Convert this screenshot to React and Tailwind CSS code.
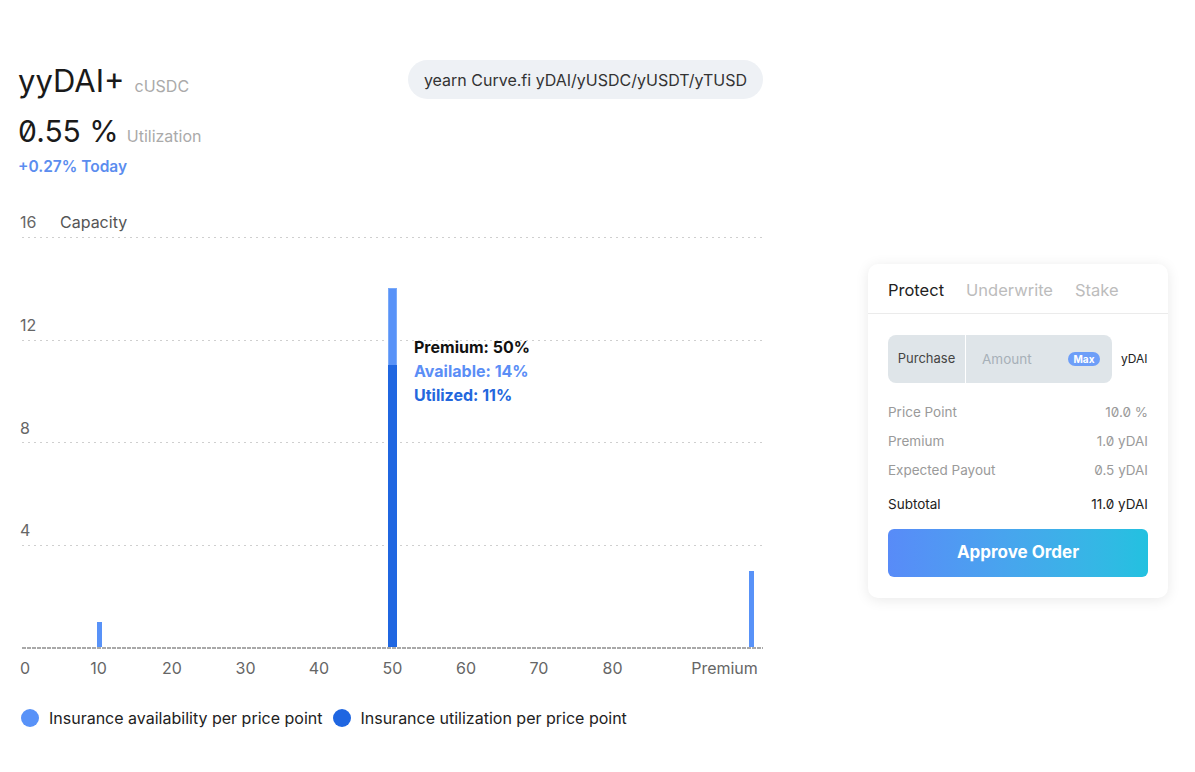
const LIGHT = "#5892f8";
const DARK = "#1f66e1";

const xTicks = [
  { label: "0", x: 25 },
  { label: "10", x: 98.5 },
  { label: "20", x: 172 },
  { label: "30", x: 245.5 },
  { label: "40", x: 319 },
  { label: "50", x: 392.5 },
  { label: "60", x: 466 },
  { label: "70", x: 539 },
  { label: "80", x: 612.5 },
  { label: "Premium", x: 724.5 },
];

const yTicks = [
  { label: "12", text: 127, line: 136 },
  { label: "8", text: 230, line: 238 },
  { label: "4", text: 332, line: 341 },
];

const Chart = () => (
  <svg width="780" height="480" className="block -ml-[18px]" style={{ fontFamily: "Inter, sans-serif" }}>
    <text x="20" y="24" fontSize="16" fill="#666">16</text>
    <text x="60" y="24" fontSize="16" fill="#555">Capacity</text>
    <line x1="22" x2="763" y1="33.5" y2="33.5" stroke="#cfcfcf" strokeDasharray="2 4" />
    {yTicks.map((t) => (
      <g key={t.label}>
        <text x="20" y={t.text} fontSize="16" fill="#666">{t.label}</text>
        <line x1="22" x2="763" y1={t.line + 0.5} y2={t.line + 0.5} stroke="#cfcfcf" strokeDasharray="2 4" />
      </g>
    ))}

    {/* bars */}
    <rect x="97" y="418" width="5" height="25" fill={LIGHT} />
    <rect x="388.5" y="84.5" width="8" height="77" fill={LIGHT} stroke="#7aaaf9" strokeWidth="1" />
    <rect x="388" y="161" width="9" height="282" fill={DARK} />
    <rect x="749" y="367" width="5" height="76" fill={LIGHT} />

    <line x1="22" x2="763" y1="444" y2="444" stroke="#a9a9a9" strokeWidth="2" strokeDasharray="4 1" />

    {xTicks.map((t) => (
      <text key={t.label} x={t.x} y="470" fontSize="16" fill="#666" textAnchor="middle">{t.label}</text>
    ))}

    {/* tooltip */}
    <text x="414" y="149" fontSize="16" fontWeight="700" fill="#111">Premium: 50%</text>
    <text x="414" y="173" fontSize="16" fontWeight="700" fill="#5b8ef6">Available: 14%</text>
    <text x="414" y="197" fontSize="16" fontWeight="700" fill="#2467dd">Utilized: 11%</text>
  </svg>
);

const Row = ({ label, value, strong }) => (
  <div className={`flex justify-between items-center h-[29px] text-[13.5px] slashed-zero ${strong ? "text-[#222]" : "text-[#9a9a9a]"}`}>
    <span>{label}</span>
    <span>{value}</span>
  </div>
);

const OrderCard = () => (
  <div className="w-[300px] h-[334px] bg-white rounded-[10px] shadow-[0_2px_14px_rgba(0,0,0,0.09)]">
    <div className="h-[50px] pt-[3px] flex items-center gap-[22px] px-5 border-b border-[#ebebeb] text-[16.5px]">
      <span className="text-[#222]">Protect</span>
      <span className="text-[#bcbcbc]">Underwrite</span>
      <span className="text-[#bcbcbc]">Stake</span>
    </div>
    <div className="px-5 pt-[21px]">
      <div className="flex items-center">
        <div className="w-[224px] h-[48px] bg-[#dfe5e9] rounded-[8px] flex items-center">
          <div className="w-[78px] h-full flex items-center justify-center text-[13px] text-[#444] border-r border-white">Purchase</div>
          <div className="flex-1 flex items-center justify-between pl-4 pr-3">
            <span className="text-[13.5px] text-[#a7b0b8]">Amount</span>
            <span className="h-[14px] w-[32px] rounded-full bg-[#6d9ef8] text-white text-[10px] font-bold flex items-center justify-center">Max</span>
          </div>
        </div>
        <span className="ml-[9px] text-[12px] text-[#222]">yDAI</span>
      </div>
      <div className="mt-[15px]">
        <Row label="Price Point" value="10.0 %" />
        <Row label="Premium" value="1.0 yDAI" />
        <Row label="Expected Payout" value="0.5 yDAI" />
        <div className="mt-[5px]">
          <Row label="Subtotal" value="11.0 yDAI" strong />
        </div>
      </div>
      <button className="mt-[10px] w-full h-[48px] rounded-[6px] bg-gradient-to-r from-[#588bf8] to-[#22c1e0] text-white text-[17px] font-bold">
        Approve Order
      </button>
    </div>
  </div>
);

export default function App() {
  return (
    <div className="w-[1195px] h-[772px] bg-white flex font-['Inter',sans-serif] text-[#222]">
      <div className="w-[745px] ml-[18px] pt-[60px]">
        <div className="flex justify-between items-start">
          <div>
            <div className="mt-[3px] flex items-baseline gap-[10px]">
              <span className="text-[31px] leading-[36px] text-[#1a1a1a]">yyDAI+</span>
              <span className="text-[16px] text-[#aaa]">cUSDC</span>
            </div>
            <div className="mt-[15px] flex items-baseline gap-[8px]">
              <span className="text-[30px] leading-[34px] slashed-zero text-[#1a1a1a]">0.55 %</span>
              <span className="text-[16px] text-[#aaa]">Utilization</span>
            </div>
            <div className="mt-[9px] text-[15.5px] leading-[20px] font-semibold text-[#5b8def]">+0.27% Today</div>
          </div>
          <div className="h-[39px] px-4 rounded-full bg-[#eef1f5] flex items-center text-[16px] text-[#333]">
            yearn Curve.fi yDAI/yUSDC/yUSDT/yTUSD
          </div>
        </div>
        <div className="mt-[27px]">
          <Chart />
        </div>
        <div className="mt-[24px] flex items-center h-[20px] text-[16px] text-[#222]">
          <span className="w-[18px] h-[18px] rounded-full bg-[#5892f8] ml-[3px]" />
          <span className="ml-[10px]">Insurance availability per price point</span>
          <span className="w-[18px] h-[18px] rounded-full bg-[#1f66e1] ml-[11px]" />
          <span className="ml-[9px]">Insurance utilization per price point</span>
        </div>
      </div>
      <div className="ml-[105px] mt-[264px]">
        <OrderCard />
      </div>
    </div>
  );
}
